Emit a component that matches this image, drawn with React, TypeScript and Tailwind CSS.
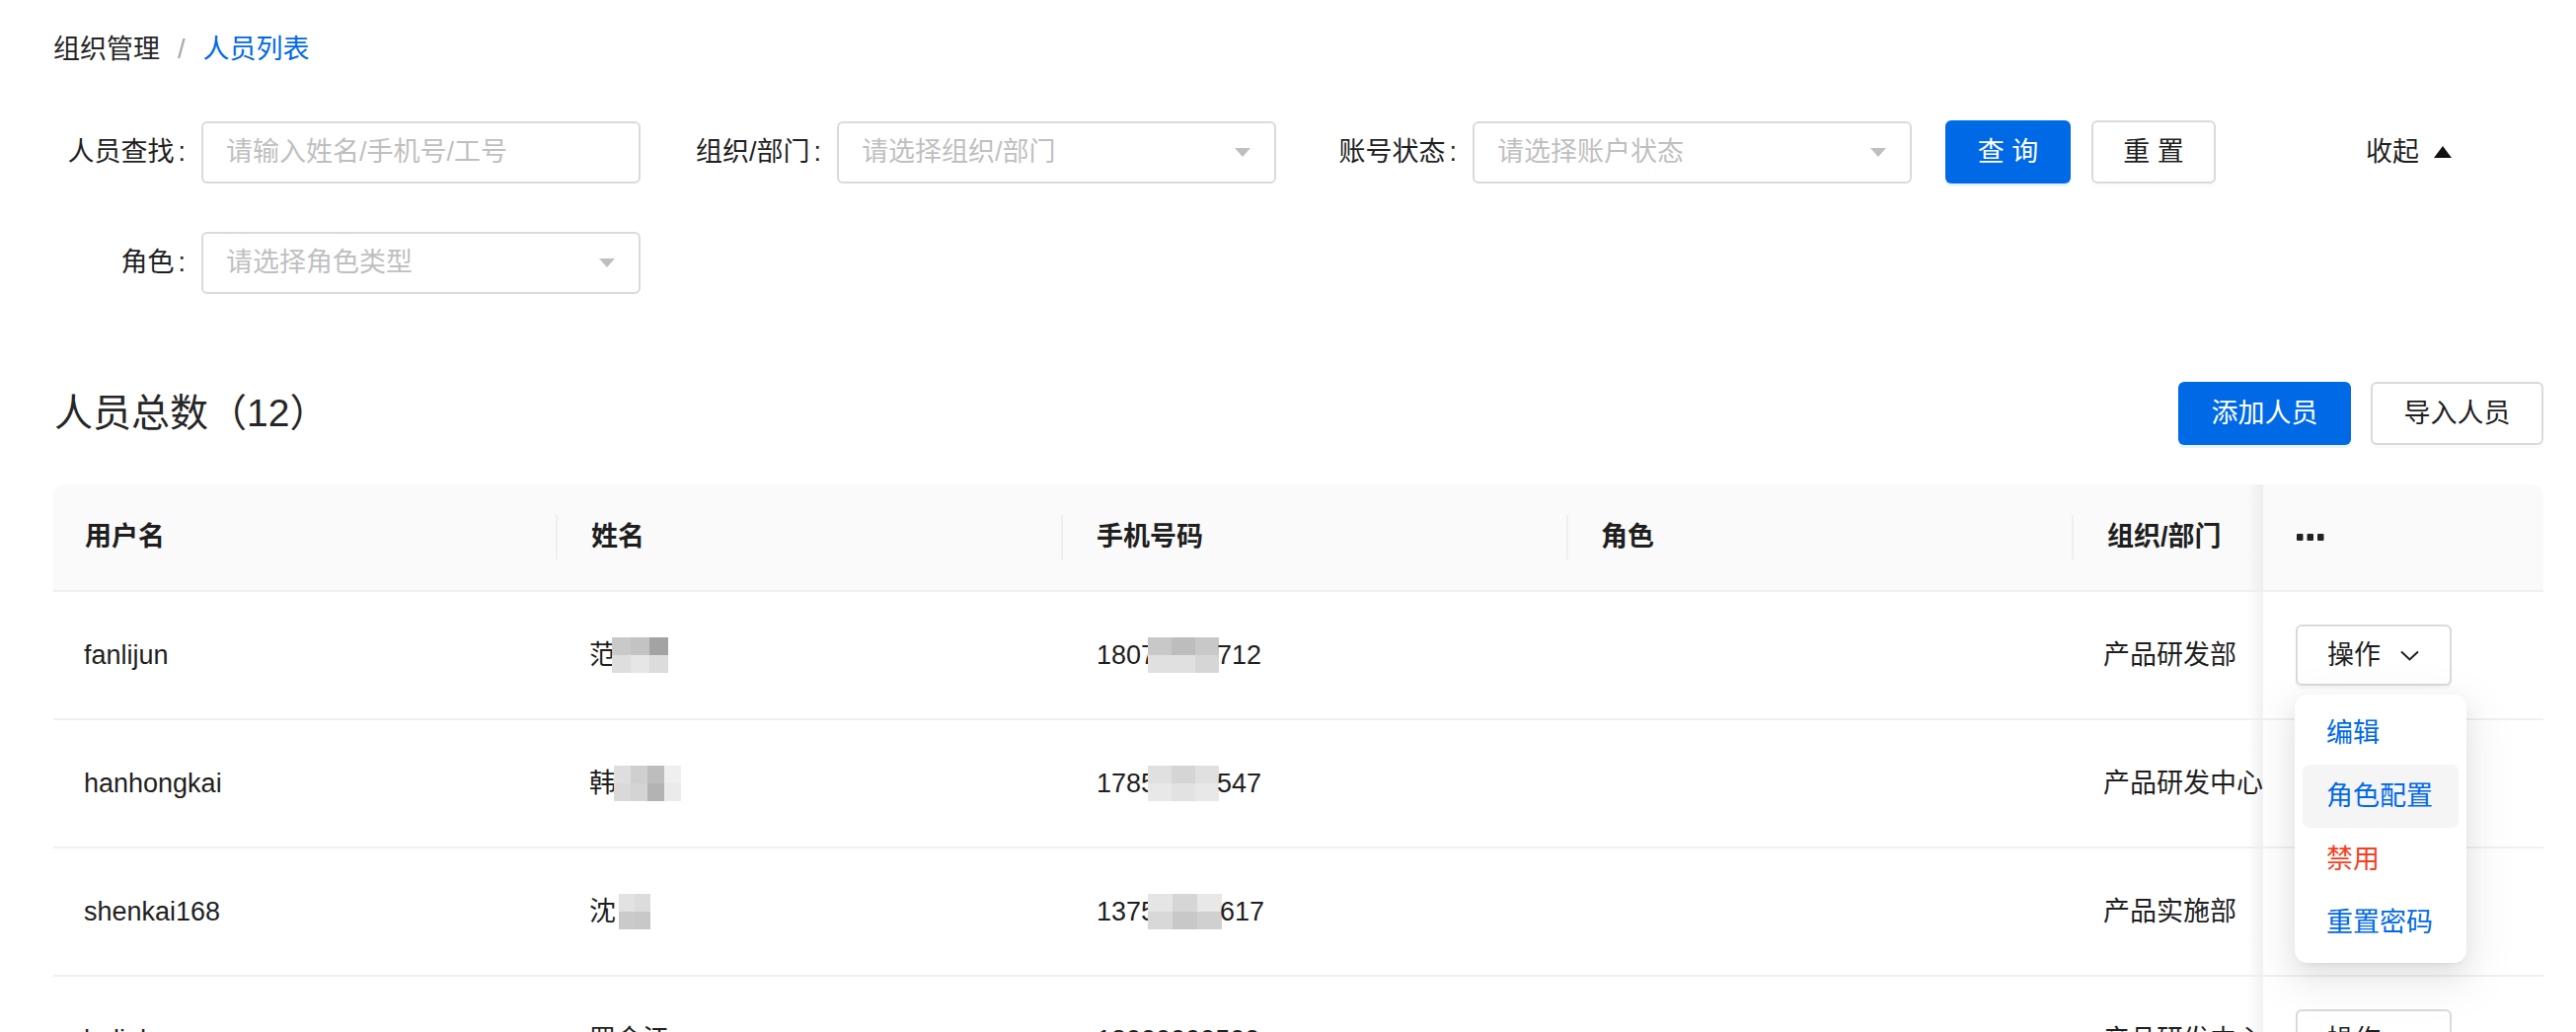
import { useState } from "react";

const font = "font-['Liberation_Sans','Noto_Sans_CJK_SC',sans-serif]";

type Row = {
  user: string;
  surname: string;
  nameBlur: string[][];
  nameCell: number;
  nameShift: number;
  phoneHead: string;
  phoneTail: string;
  phoneBlur: string[][];
  phoneCell: number;
  dept: string;
};

const rows: Row[] = [
  {
    user: "fanlijun",
    surname: "范",
    nameBlur: [
      ["#c9c9c9", "#c3c3c3", "#a3a3a3"],
      ["#dedede", "#e6e6e6", "#dcdcdc"],
    ],
    nameCell: 19,
    nameShift: -4,
    phoneHead: "1807",
    phoneTail: "712",
    phoneBlur: [
      ["#c8c8c8", "#bdbdbd", "#c8c8c8"],
      ["#e0e0e0", "#e0e0e0", "#d6d6d6"],
    ],
    phoneCell: 24,
    dept: "产品研发部",
  },
  {
    user: "hanhongkai",
    surname: "韩",
    nameBlur: [
      ["#dedede", "#cfcfcf", "#bdbdbd", "#efefef"],
      ["#d9d9d9", "#d4d4d4", "#b3b3b3", "#ebebeb"],
    ],
    nameCell: 17,
    nameShift: -2,
    phoneHead: "1785",
    phoneTail: "547",
    phoneBlur: [
      ["#e0e0e0", "#d5d5d5", "#e0e0e0"],
      ["#e8e8e8", "#e2e2e2", "#e8e8e8"],
    ],
    phoneCell: 24,
    dept: "产品研发中心",
  },
  {
    user: "shenkai168",
    surname: "沈",
    nameBlur: [
      ["#e2e2e2", "#dcdcdc"],
      ["#cacaca", "#c8c8c8"],
    ],
    nameCell: 16,
    nameShift: 3,
    phoneHead: "1375",
    phoneTail: "617",
    phoneBlur: [
      ["#e5e5e5", "#d6d6d6", "#e8e8e8"],
      ["#d8d8d8", "#c8c8c8", "#d0d0d0"],
    ],
    phoneCell: 25,
    dept: "产品实施部",
  },
  {
    user: "hulinhao",
    surname: "罗金江",
    nameBlur: [],
    nameCell: 0,
    nameShift: 0,
    phoneHead: "18000000500",
    phoneTail: "",
    phoneBlur: [],
    phoneCell: 0,
    dept: "产品研发中心",
  },
];

function Blur({ grid, cell, shift }: { grid: string[][]; cell: number; shift: number }) {
  if (!grid.length) return null;
  return (
    <span className="inline-flex flex-col" style={{ marginLeft: shift }}>
      {grid.map((r, i) => (
        <span key={i} className="flex">
          {r.map((c, j) => (
            <span key={j} style={{ width: cell, height: 18, background: c }} />
          ))}
        </span>
      ))}
    </span>
  );
}

function Caret() {
  return (
    <svg width="16" height="9" viewBox="0 0 16 9">
      <polygon points="0,0 16,0 8,9" fill="#bfbfbf" />
    </svg>
  );
}

function Field({
  label,
  placeholder,
  select,
  last,
}: {
  label: string;
  placeholder: string;
  select?: boolean;
  last?: boolean;
}) {
  return (
    <div className={last ? "flex w-[595px] items-center" : "flex w-[644px] items-center"}>
      <div className="w-[134px] whitespace-nowrap text-right text-[27px] text-[#1f1f1f]">
        {label}
        <span className="ml-[4px]">:</span>
      </div>
      <div className="ml-[16px] flex h-[63px] w-[445px] items-center justify-between rounded-[6px] border-2 border-[#dadada] pl-[23px] pr-[24px] text-[27px] text-[#bfbfbf]">
        <span className="whitespace-nowrap">{placeholder}</span>
        {select && <Caret />}
      </div>
    </div>
  );
}

function HeadCell({ w, pl, children, sep = true }: { w: string; pl: string; children: React.ReactNode; sep?: boolean }) {
  return (
    <div className={`flex h-full items-center ${w}`}>
      <span className={`${pl} whitespace-nowrap font-semibold`}>{children}</span>
      {sep && <span className="ml-auto h-[45px] w-[2px] bg-[#efefef]" />}
    </div>
  );
}

export default function App() {
  const [open] = useState(true);

  return (
    <div className={`min-h-screen bg-white pl-[54px] pr-[33px] pt-[30px] text-[#1f1f1f] ${font}`}>
      {/* breadcrumb */}
      <div className="flex h-[40px] items-center text-[27px] leading-none">
        <span className="text-[#262626]">组织管理</span>
        <span className="mx-[18px] text-[#a6a6a6]">/</span>
        <span className="text-[#0069e6]">人员列表</span>
      </div>

      {/* filters */}
      <div className="mt-[52px] flex items-center">
        <Field label="人员查找" placeholder="请输入姓名/手机号/工号" />
        <Field label="组织/部门" placeholder="请选择组织/部门" select />
        <Field label="账号状态" placeholder="请选择账户状态" select last />
        <button className="ml-[34px] flex h-[64px] w-[127px] items-center justify-center rounded-[6px] bg-[#0069e6] text-[27px] text-white shadow-[0_3px_0_rgba(5,145,255,0.1)]">
          查 询
        </button>
        <button className="ml-[21px] flex h-[64px] w-[126px] items-center justify-center rounded-[6px] border-2 border-[#dadada] bg-white text-[27px] text-[#1f1f1f] shadow-[0_3px_0_rgba(0,0,0,0.02)]">
          重 置
        </button>
        <div className="ml-[152px] flex items-center text-[27px] text-[#1f1f1f]">
          收起
          <svg className="ml-[15px]" width="18" height="12" viewBox="0 0 18 12">
            <polygon points="9,0 18,12 0,12" fill="#111" />
          </svg>
        </div>
      </div>
      <div className="mt-[49px] flex items-center">
        <Field label="角色" placeholder="请选择角色类型" select />
      </div>

      {/* title */}
      <div className="mt-[89px] flex h-[64px] items-center justify-between">
        <h1 className="ml-[1px] text-[39px] font-normal text-[#262626]">人员总数（12）</h1>
        <div className="flex gap-[20px]">
          <button className="flex h-[64px] w-[175px] items-center justify-center rounded-[6px] bg-[#0069e6] text-[27px] text-white shadow-[0_3px_0_rgba(5,145,255,0.1)]">
            添加人员
          </button>
          <button className="flex h-[64px] w-[175px] items-center justify-center rounded-[6px] border-2 border-[#dadada] bg-white text-[27px] text-[#1f1f1f] shadow-[0_3px_0_rgba(0,0,0,0.02)]">
            导入人员
          </button>
        </div>
      </div>

      {/* table */}
      <div className="mt-[40px] text-[27px]">
        <div className="flex h-[109px] overflow-hidden rounded-t-[13px] border-b-2 border-[#f0f0f0] bg-[#fafafa]">
          <HeadCell w="w-[511px]" pl="pl-[32px]">用户名</HeadCell>
          <HeadCell w="w-[512px]" pl="pl-[34px]">姓名</HeadCell>
          <HeadCell w="w-[512px]" pl="pl-[34px]">手机号码</HeadCell>
          <HeadCell w="w-[512px]" pl="pl-[33px]">角色</HeadCell>
          <HeadCell w="w-[192px]" pl="pl-[34px]" sep={false}>
            组织/部门
          </HeadCell>
          <div className="relative flex w-[284px] items-center bg-[#fafafa] pl-[34px]">
            <div className="absolute -left-[16px] top-0 h-full w-[16px] bg-gradient-to-l from-black/[0.05] to-transparent" />
            <svg width="28" height="7" viewBox="0 0 28 7">
              <rect x="0" y="0" width="6.5" height="7" rx="1" fill="#222" />
              <rect x="10.5" y="0" width="6.5" height="7" rx="1" fill="#222" />
              <rect x="21" y="0" width="6.5" height="7" rx="1" fill="#222" />
            </svg>
          </div>
        </div>

        {rows.map((r, idx) => (
          <div key={r.user} className="flex h-[130px] items-center border-b-2 border-[#f0f0f0]">
            <div className="w-[511px] pl-[31px]">{r.user}</div>
            <div className="flex w-[512px] items-center pl-[32px]">
              <span>{r.surname}</span>
              <Blur grid={r.nameBlur} cell={r.nameCell} shift={r.nameShift} />
            </div>
            <div className="flex w-[512px] items-center pl-[34px]">
              <span>{r.phoneHead}</span>
              <Blur grid={r.phoneBlur} cell={r.phoneCell} shift={-8} />
              <span className={r.phoneBlur.length ? "-ml-[2px]" : ""}>{r.phoneTail}</span>
            </div>
            <div className="w-[512px]" />
            <div className="w-[192px] overflow-hidden whitespace-nowrap pl-[30px]">{r.dept}</div>
            <div className="relative flex h-full w-[284px] items-center bg-white pl-[33px]">
              <div className="absolute -left-[16px] top-0 h-full w-[16px] bg-gradient-to-l from-black/[0.05] to-transparent" />
              <div className="relative">
                <button
                  className={`flex h-[62px] w-[158px] items-center rounded-[6px] border-2 border-[#dadada] bg-white pl-[30px] text-[27px] text-[#1f1f1f] shadow-[0_3px_0_rgba(0,0,0,0.03)] ${
                    open && (idx === 1 || idx === 2) ? "invisible" : ""
                  }`}
                >
                  操作
                  <svg className="ml-[20px]" width="19" height="11" viewBox="0 0 19 11">
                    <polyline points="1,1.5 9.5,9.5 18,1.5" fill="none" stroke="#1f1f1f" strokeWidth="2" />
                  </svg>
                </button>
                {open && idx === 0 && (
                  <div className="absolute -left-[1px] top-[71px] z-10 w-[174px] rounded-[13px] bg-white px-[8px] pb-[9px] pt-[7px] shadow-[0_10px_26px_0_rgba(0,0,0,0.08),0_5px_10px_-7px_rgba(0,0,0,0.12),0_15px_46px_13px_rgba(0,0,0,0.05)]">
                    <div className="flex h-[64px] items-center rounded-[7px] pl-[24px] text-[#0069e6]">编辑</div>
                    <div className="flex h-[64px] items-center rounded-[7px] bg-[#f5f5f5] pl-[24px] text-[#0069e6]">角色配置</div>
                    <div className="flex h-[64px] items-center rounded-[7px] pl-[24px] text-[#f53f1f]">禁用</div>
                    <div className="flex h-[64px] items-center rounded-[7px] pl-[24px] text-[#0069e6]">重置密码</div>
                  </div>
                )}
              </div>
            </div>
          </div>
        ))}
      </div>
    </div>
  );
}
